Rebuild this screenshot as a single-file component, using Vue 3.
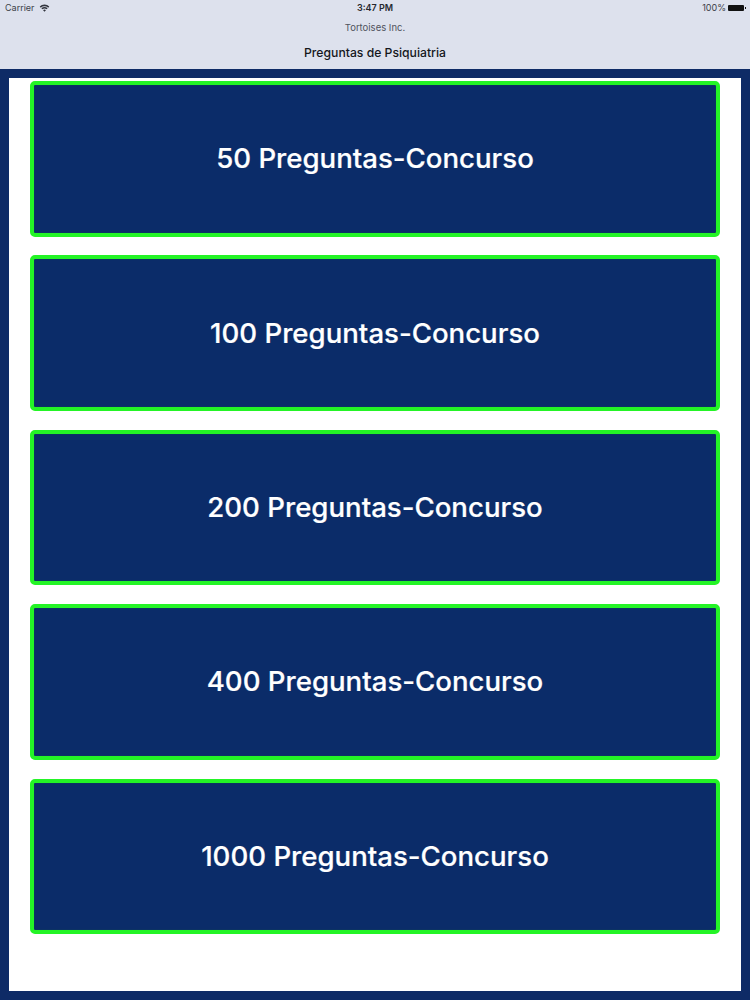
<template>
  <div class="screen">
    <!-- Status + nav -->
    <header class="nav">
      <div class="status">
        <div class="status-left">
          <span>Carrier</span>
          <svg class="wifi" viewBox="0 0 12 9" width="11" height="8">
            <path d="M6 8.6 L4.4 6.9 A2.4 2.4 0 0 1 7.6 6.9 Z" fill="#33363f" />
            <path d="M3.6 6 L2.5 4.8 A5 5 0 0 1 9.5 4.8 L8.4 6 A3.6 3.6 0 0 0 3.6 6 Z" fill="#33363f" />
            <path d="M1.8 4.1 L0.6 2.8 A7.8 7.8 0 0 1 11.4 2.8 L10.2 4.1 A6.2 6.2 0 0 0 1.8 4.1 Z" fill="#33363f" />
          </svg>
        </div>
        <span class="clock">3:47 PM</span>
        <div class="status-right">
          <span>100%</span>
          <span class="battery"></span>
        </div>
      </div>
      <div class="company">Tortoises Inc.</div>
      <div class="nav-title">Preguntas de Psiquiatria</div>
    </header>

    <!-- Menu -->
    <main class="frame">
      <div class="sheet">
        <button v-for="q in options" :key="q" class="opt">{{ q }} Preguntas-Concurso</button>
      </div>
    </main>
  </div>
</template>

<script setup>
const options = [50, 100, 200, 400, 1000]
</script>

<style>
html, body { margin: 0; background: #0e2b66; }
</style>

<style scoped>
.screen {
  width: 750px;
  height: 1000px;
  display: flex;
  flex-direction: column;
  background: #0e2b66;
  font-family: Inter, "Liberation Sans", sans-serif;
  overflow: hidden;
}

/* Header */
.nav {
  height: 69px;
  flex-shrink: 0;
  background: #dde1ed;
  box-sizing: border-box;
  padding: 0 5px;
}
.status {
  height: 15px;
  display: grid;
  grid-template-columns: 1fr auto 1fr;
  align-items: center;
  font-size: 9px;
  color: #3c3f48;
}
.status-left { display: flex; align-items: center; gap: 4px; }
.wifi { display: block; }
.clock { font-weight: 600; color: #25272d; }
.status-right { display: flex; align-items: center; justify-content: flex-end; gap: 2px; }
.battery {
  width: 16px;
  height: 6px;
  background: #111;
  border-radius: 1px;
  margin-right: 1px;
  position: relative;
}
.battery::after {
  content: "";
  position: absolute;
  right: -2px;
  top: 2px;
  width: 1px;
  height: 2px;
  background: #111;
}
.company {
  margin-top: 7px;
  text-align: center;
  font-size: 9.5px;
  line-height: 12px;
  color: #50535d;
}
.nav-title {
  margin-top: 11px;
  text-align: center;
  font-size: 12.2px;
  line-height: 16px;
  font-weight: 500;
  color: #15171c;
}

/* Menu */
.frame {
  flex: 1;
  box-sizing: border-box;
  padding: 9px;
  display: flex;
}
.sheet {
  flex: 1;
  background: #fff;
  box-sizing: border-box;
  padding: 3px 21px 0;
  display: flex;
  flex-direction: column;
  gap: 18.9px;
}
.opt {
  height: 155.5px;
  flex-shrink: 0;
  box-sizing: border-box;
  background: #0b2c69;
  border: 4px solid #24f426;
  border-radius: 5px;
  box-shadow: inset 0 0 1px #14792f;
  color: #fff;
  font-family: inherit;
  font-size: 27.6px;
  font-weight: 500;
  -webkit-text-stroke: 0.2px #fff;
  padding: 0 0 1px;
}
</style>
